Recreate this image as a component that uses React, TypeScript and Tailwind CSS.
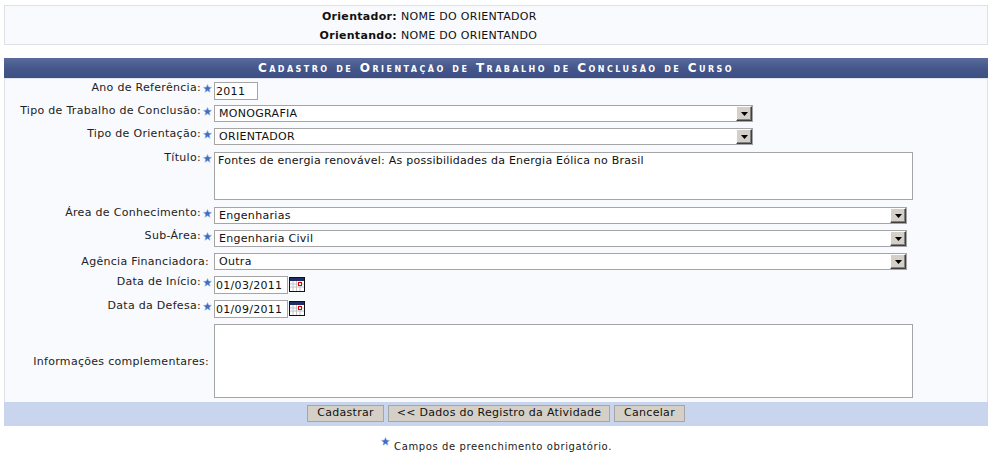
const Star = ({ className = "" }: { className?: string }) => (
  <svg viewBox="0 0 12 12" className={`w-[9px] h-[9px] ${className}`}>
    <path d="M6 .5l1.6 3.6 3.9.4-2.9 2.6.8 3.9L6 9l-3.4 2 .8-3.9L.5 4.5l3.9-.4z" fill="#3f6fc4" stroke="#a9bfe6" strokeWidth="0.8" />
  </svg>
);

const Arrow = () => (
  <div className="w-[16px] h-[15px] bg-[#d4d0c8] border-t border-l border-t-white border-l-white border-r border-b border-r-[#404040] border-b-[#404040] shadow-[inset_-1px_-1px_0_#808080] flex items-center justify-center">
    <svg viewBox="0 0 7 4" className="w-[7px] h-[4px]"><path d="M0 0h7L3.5 4z" fill="#000" /></svg>
  </div>
);

const Select = ({ value, w }: { value: string; w: string }) => (
  <div className={`${w} h-[17px] bg-white border border-[#a5a5a5] flex items-center justify-between pl-[4px]`}>
    <span className="leading-none">{value}</span>
    <Arrow />
  </div>
);

const Input = ({ value, w }: { value: string; w: string }) => (
  <div className={`${w} h-[18px] bg-white border border-[#a5a5a5] flex items-center pl-[1px] pt-[1px]`}>
    <span className="leading-none">{value}</span>
  </div>
);

const Cal = () => (
  <svg viewBox="0 0 16 15" className="w-[16px] h-[15px] ml-[1px] mt-[1px]">
    <rect x="0.5" y="0.5" width="15" height="14" fill="#fff" stroke="#111" />
    <rect x="1" y="1" width="14" height="3" fill="#1f2f66" />
    <path d="M4 4v10M7.5 4v10M11 4v10M1 7h14M1 10h14" stroke="#c4c4c4" strokeWidth="1" />
    <rect x="9.5" y="5.5" width="3" height="3" fill="#fff" stroke="#e00000" />
  </svg>
);

const Row = ({
  label,
  h,
  star = true,
  labelClass = "mt-[-1px]",
  children,
}: {
  label: string;
  h: string;
  star?: boolean;
  labelClass?: string;
  children: React.ReactNode;
}) => (
  <div className={`flex ${h}`}>
    <div className={`shrink-0 text-right leading-[13px] text-[#222] ${star ? "w-[196px]" : "w-[204px]"} ${labelClass}`}>
      {label}
    </div>
    {star && (
      <div className="w-[9px] ml-[2px] mr-[2px] shrink-0 flex justify-start pt-[2px]">
        <Star />
      </div>
    )}
    <div className={`flex items-start ${star ? "" : "ml-[5px]"}`}>{children}</div>
  </div>
);

const Btn = ({ w, children }: { w: string; children: React.ReactNode }) => (
  <div className={`${w} h-[17px] bg-[#d4d0c8] border border-[#a5a5a5] flex items-center justify-center text-[#111]`}>
    {children}
  </div>
);

export default function App() {
  return (
    <div className="w-[993px] h-[461px] bg-white overflow-hidden pt-[5px] px-[4px] text-[11px] tracking-[0.3px] text-[#111] font-['DejaVu_Sans',Verdana,sans-serif]">
      <div className="w-[984px] h-[40px] border border-[#e0e0e8] bg-[#f9fafd] flex flex-col pt-[4px] gap-[6px] leading-[13px]">
        <div className="flex"><b className="w-[392px] text-right tracking-[0.3px]">Orientador:</b><span className="ml-[4px]">NOME DO ORIENTADOR</span></div>
        <div className="flex"><b className="w-[392px] text-right tracking-[0.3px]">Orientando:</b><span className="ml-[4px]">NOME DO ORIENTANDO</span></div>
      </div>
      <div className="mt-[13px] w-[984px]">
        <div className="h-[21px] bg-[linear-gradient(#5a6c9b,#43558a_55%,#3d4f83)] flex items-center justify-center text-white font-bold text-[12px] tracking-[2.45px] [font-variant:small-caps] border-b border-b-[#dfe3ee]">
          Cadastro de Orientação de Trabalho de Conclusão de Curso
        </div>
        <div className="bg-[#f9fafd] border-x border-x-[#e0e0e8] pt-[3px] flex flex-col h-[323px]">
          <Row label="Ano de Referência:" h="h-[23px]"><Input value="2011" w="w-[44px]" /></Row>
          <Row label="Tipo de Trabalho de Conclusão:" h="h-[23px]"><Select value="MONOGRAFIA" w="w-[539px]" /></Row>
          <Row label="Tipo de Orientação:" h="h-[24px]"><Select value="ORIENTADOR" w="w-[539px]" /></Row>
          <Row label="Título:" h="h-[55px]">
            <div className="w-[699px] h-[48px] bg-white border border-[#a5a5a5] px-[3px] pt-[1px] leading-[14px] tracking-[0.24px]">
              Fontes de energia renovável: As possibilidades da Energia Eólica no Brasil
            </div>
          </Row>
          <Row label="Área de Conhecimento:" h="h-[23px]"><Select value="Engenharias" w="w-[693px]" /></Row>
          <Row label="Sub-Área:" h="h-[23px]"><Select value="Engenharia Civil" w="w-[693px]" /></Row>
          <Row label="Agência Financiadora:" h="h-[23px]" star={false} labelClass="mt-[2px]">
            <Select value="Outra" w="w-[693px]" />
          </Row>
          <Row label="Data de Início:" h="h-[24px]"><Input value="01/03/2011" w="w-[74px]" /><Cal /></Row>
          <Row label="Data da Defesa:" h="h-[24px]"><Input value="01/09/2011" w="w-[74px]" /><Cal /></Row>
          <Row label="Informações complementares:" h="h-[74px]" star={false} labelClass="self-center">
            <div className="w-[699px] h-[74px] bg-white border border-[#a5a5a5]" />
          </Row>
        </div>
        <div className="h-[24px] bg-[#c8d5ec] flex items-center justify-center gap-[4px] pb-[1px]">
          <Btn w="w-[77px]">Cadastrar</Btn>
          <Btn w="w-[222px]">&lt;&lt; Dados do Registro da Atividade</Btn>
          <Btn w="w-[71px]">Cancelar</Btn>
        </div>
      </div>
      <div className="mt-[14px] flex justify-center items-start text-[10px] tracking-[0.6px] leading-[13px] text-[#222]">
        <Star className="mr-[4px] mt-[-3px]" />
        <span>Campos de preenchimento obrigatório.</span>
      </div>
    </div>
  );
}
